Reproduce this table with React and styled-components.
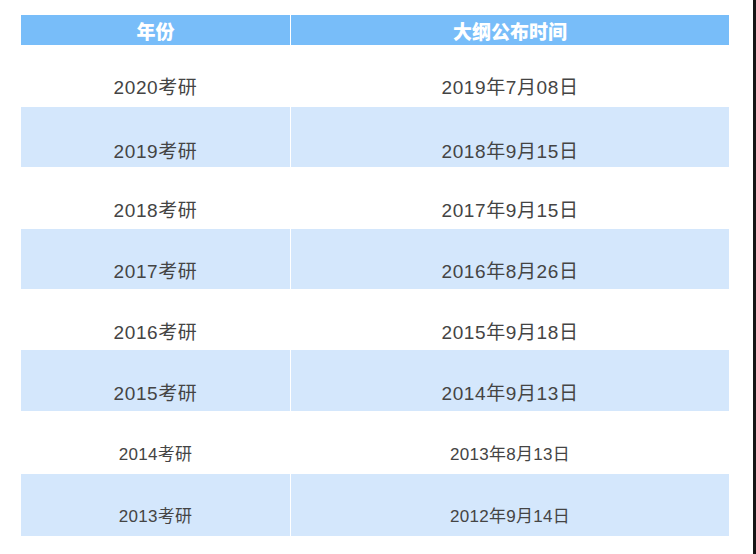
import React from 'react';
import styled, { createGlobalStyle } from 'styled-components';

const GlobalStyle = createGlobalStyle`
  html, body {
    margin: 0;
    padding: 0;
    background: #ffffff;
  }
  body {
    font-family: "Liberation Sans", Arial, "Noto Sans CJK SC", sans-serif;
  }
`;

const Page = styled.div`
  display: flex;
  width: 756px;
  height: 554px;
  overflow: hidden;
`;

const Sheet = styled.div`
  flex: 1;
  padding: 15px 0 0 21px;
`;

const Edge = styled.div`
  width: 3px;
  background: #161616;
`;

const Table = styled.div`
  width: 708px;
  display: flex;
  flex-direction: column;
`;

const HeadRow = styled.div`
  display: grid;
  grid-template-columns: 269px 438px;
  column-gap: 1px;
  height: 30px;
  background: #ffffff;
`;

const HeadCell = styled.div`
  display: flex;
  align-items: center;
  justify-content: center;
  background: #78bdf9;
  color: #ffffff;
  font-weight: 900;
  font-size: 19px;
  font-family: "Noto Sans CJK SC", "Liberation Sans", sans-serif;
`;

const Row = styled.div`
  display: grid;
  grid-template-columns: 269px 438px;
  column-gap: 1px;
  height: ${p => p.$h}px;
  background: ${p => (p.$shaded ? '#ffffff' : 'transparent')};
`;

const Cell = styled.div`
  display: flex;
  justify-content: center;
  align-items: flex-start;
  padding-top: ${p => p.$top}px;
  background: ${p => (p.$shaded ? '#d4e7fc' : '#ffffff')};
  color: #444444;
  font-size: ${p => (p.$small ? 17 : 19)}px;
  letter-spacing: ${p => (p.$small ? 0.3 : 0.6)}px;
  line-height: 24px;
`;

const ROWS = [
  { year: '2020考研', date: '2019年7月08日', h: 62, top: 31 },
  { year: '2019考研', date: '2018年9月15日', h: 60, top: 33, shaded: true },
  { year: '2018考研', date: '2017年9月15日', h: 62, top: 32 },
  { year: '2017考研', date: '2016年8月26日', h: 60, top: 31, shaded: true },
  { year: '2016考研', date: '2015年9月18日', h: 61, top: 32 },
  { year: '2015考研', date: '2014年9月13日', h: 61, top: 32, shaded: true },
  { year: '2014考研', date: '2013年8月13日', h: 63, top: 32, small: true },
  { year: '2013考研', date: '2012年9月14日', h: 62, top: 31, shaded: true, small: true },
];

export default function App() {
  return (
    <>
      <GlobalStyle />
      <Page>
        <Sheet>
          <Table>
            <HeadRow>
              <HeadCell>年份</HeadCell>
              <HeadCell>大纲公布时间</HeadCell>
            </HeadRow>
            {ROWS.map(r => (
              <Row key={r.year} $h={r.h} $shaded={r.shaded}>
                <Cell $top={r.top} $shaded={r.shaded} $small={r.small}>{r.year}</Cell>
                <Cell $top={r.top} $shaded={r.shaded} $small={r.small}>{r.date}</Cell>
              </Row>
            ))}
          </Table>
        </Sheet>
        <Edge />
      </Page>
    </>
  );
}
